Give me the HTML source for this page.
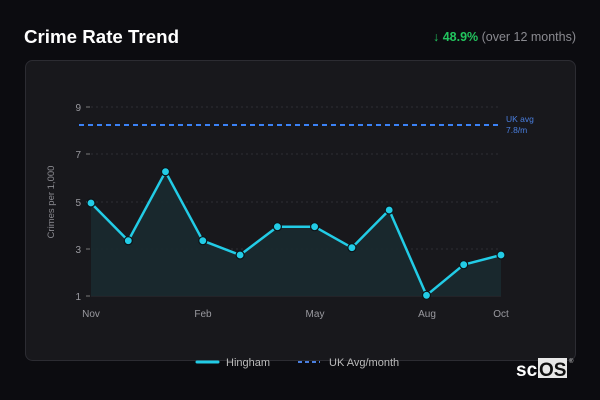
<!DOCTYPE html>
<html><head><meta charset="utf-8"><style>
html,body{margin:0;padding:0;background:#0c0c10;width:600px;height:400px;overflow:hidden;font-family:"Liberation Sans","DejaVu Sans",sans-serif}
</style></head><body>
<svg width="600" height="400" xmlns="http://www.w3.org/2000/svg" style="position:absolute;left:0;top:0">
<rect x="0" y="0" width="600" height="400" fill="#0c0c10"/>
<text x="24" y="43" fill="#fff" font-size="18" font-weight="bold" textLength="155" lengthAdjust="spacingAndGlyphs" font-family="Liberation Sans, sans-serif">Crime Rate Trend</text>
<text x="576" y="41" text-anchor="end" font-size="12.5" font-family="Liberation Sans, sans-serif" textLength="143" lengthAdjust="spacingAndGlyphs"><tspan fill="#22c55e">↓ </tspan><tspan fill="#22c55e" font-weight="bold">48.9%</tspan><tspan fill="#8a8a90"> (over 12 months)</tspan></text>
<rect x="25.5" y="60.5" width="550" height="300" rx="7" fill="#18181c" stroke="#2c2c32"/>
<g stroke="#2e2e34" stroke-dasharray="2,3" stroke-width="1">
<line x1="91" y1="107" x2="501" y2="107"/><line x1="91" y1="154" x2="501" y2="154"/><line x1="91" y1="202" x2="501" y2="202"/><line x1="91" y1="249" x2="501" y2="249"/>
</g>
<g stroke="#777" stroke-width="1"><line x1="86" y1="107" x2="90" y2="107"/><line x1="86" y1="154" x2="90" y2="154"/><line x1="86" y1="202" x2="90" y2="202"/><line x1="86" y1="249" x2="90" y2="249"/><line x1="86" y1="296" x2="90" y2="296"/></g>
<line x1="91" y1="296" x2="501" y2="296" stroke="#2e2e34"/>
<g fill="#9a9aa0" font-size="10" text-anchor="end" font-family="Liberation Sans, sans-serif">
<text x="81" y="111">9</text><text x="81" y="158">7</text><text x="81" y="206">5</text><text x="81" y="253">3</text><text x="81" y="300">1</text></g>
<text transform="translate(54,202) rotate(-90)" text-anchor="middle" fill="#8a8a90" font-size="9.5" font-family="Liberation Sans, sans-serif">Crimes per 1,000</text>
<g fill="#9a9aa0" font-size="10" text-anchor="middle" font-family="Liberation Sans, sans-serif">
<text x="91" y="317">Nov</text><text x="203" y="317">Feb</text><text x="315" y="317">May</text><text x="427" y="317">Aug</text><text x="501" y="317">Oct</text></g>
<line x1="79" y1="125" x2="498" y2="125" stroke="#3b82f6" stroke-width="2" stroke-dasharray="5,4"/>
<text x="506" y="122" fill="#4a7fe0" font-size="8.5" font-family="Liberation Sans, sans-serif">UK avg</text>
<text x="506" y="133" fill="#4a7fe0" font-size="8.5" font-family="Liberation Sans, sans-serif">7.8/m</text>
<polygon fill="#1a2a30" fill-opacity="0.9" points="91,203 128.3,240.7 165.5,171.7 202.8,240.7 240.1,255 277.4,226.7 314.6,226.7 351.9,247.7 389.2,210 426.5,295.3 463.7,264.7 501,255 501,296 91,296"/>
<polyline fill="none" stroke="#22cce6" stroke-width="2.5" stroke-linejoin="round" points="91,203 128.3,240.7 165.5,171.7 202.8,240.7 240.1,255 277.4,226.7 314.6,226.7 351.9,247.7 389.2,210 426.5,295.3 463.7,264.7 501,255"/>
<g fill="#22cce6" stroke="#0c1418" stroke-width="1.2">
<circle cx="91" cy="203" r="4"/><circle cx="128.3" cy="240.7" r="4"/><circle cx="165.5" cy="171.7" r="4"/><circle cx="202.8" cy="240.7" r="4"/><circle cx="240.1" cy="255" r="4"/><circle cx="277.4" cy="226.7" r="4"/><circle cx="314.6" cy="226.7" r="4"/><circle cx="351.9" cy="247.7" r="4"/><circle cx="389.2" cy="210" r="4"/><circle cx="426.5" cy="295.3" r="4"/><circle cx="463.7" cy="264.7" r="4"/><circle cx="501" cy="255" r="4"/></g>
<line x1="197" y1="362" x2="218" y2="362" stroke="#22cce6" stroke-width="3" stroke-linecap="round"/>
<text x="226" y="366" fill="#bbb" font-size="11" font-family="Liberation Sans, sans-serif">Hingham</text>
<line x1="298" y1="362" x2="320" y2="362" stroke="#4a7fe0" stroke-width="2" stroke-dasharray="4,3"/>
<text x="329" y="366" fill="#bbb" font-size="11" font-family="Liberation Sans, sans-serif">UK Avg/month</text>
<rect x="538" y="358" width="29" height="20" fill="#e8e8e8"/>
<text x="516" y="376" fill="#fff" font-size="19" font-weight="bold" font-family="Liberation Sans, sans-serif">sc</text>
<text x="539" y="376" fill="#111" font-size="19" font-weight="bold" font-family="Liberation Sans, sans-serif">OS</text>
<text x="569" y="363" fill="#ccc" font-size="6">®</text>
</svg>
</body></html>
